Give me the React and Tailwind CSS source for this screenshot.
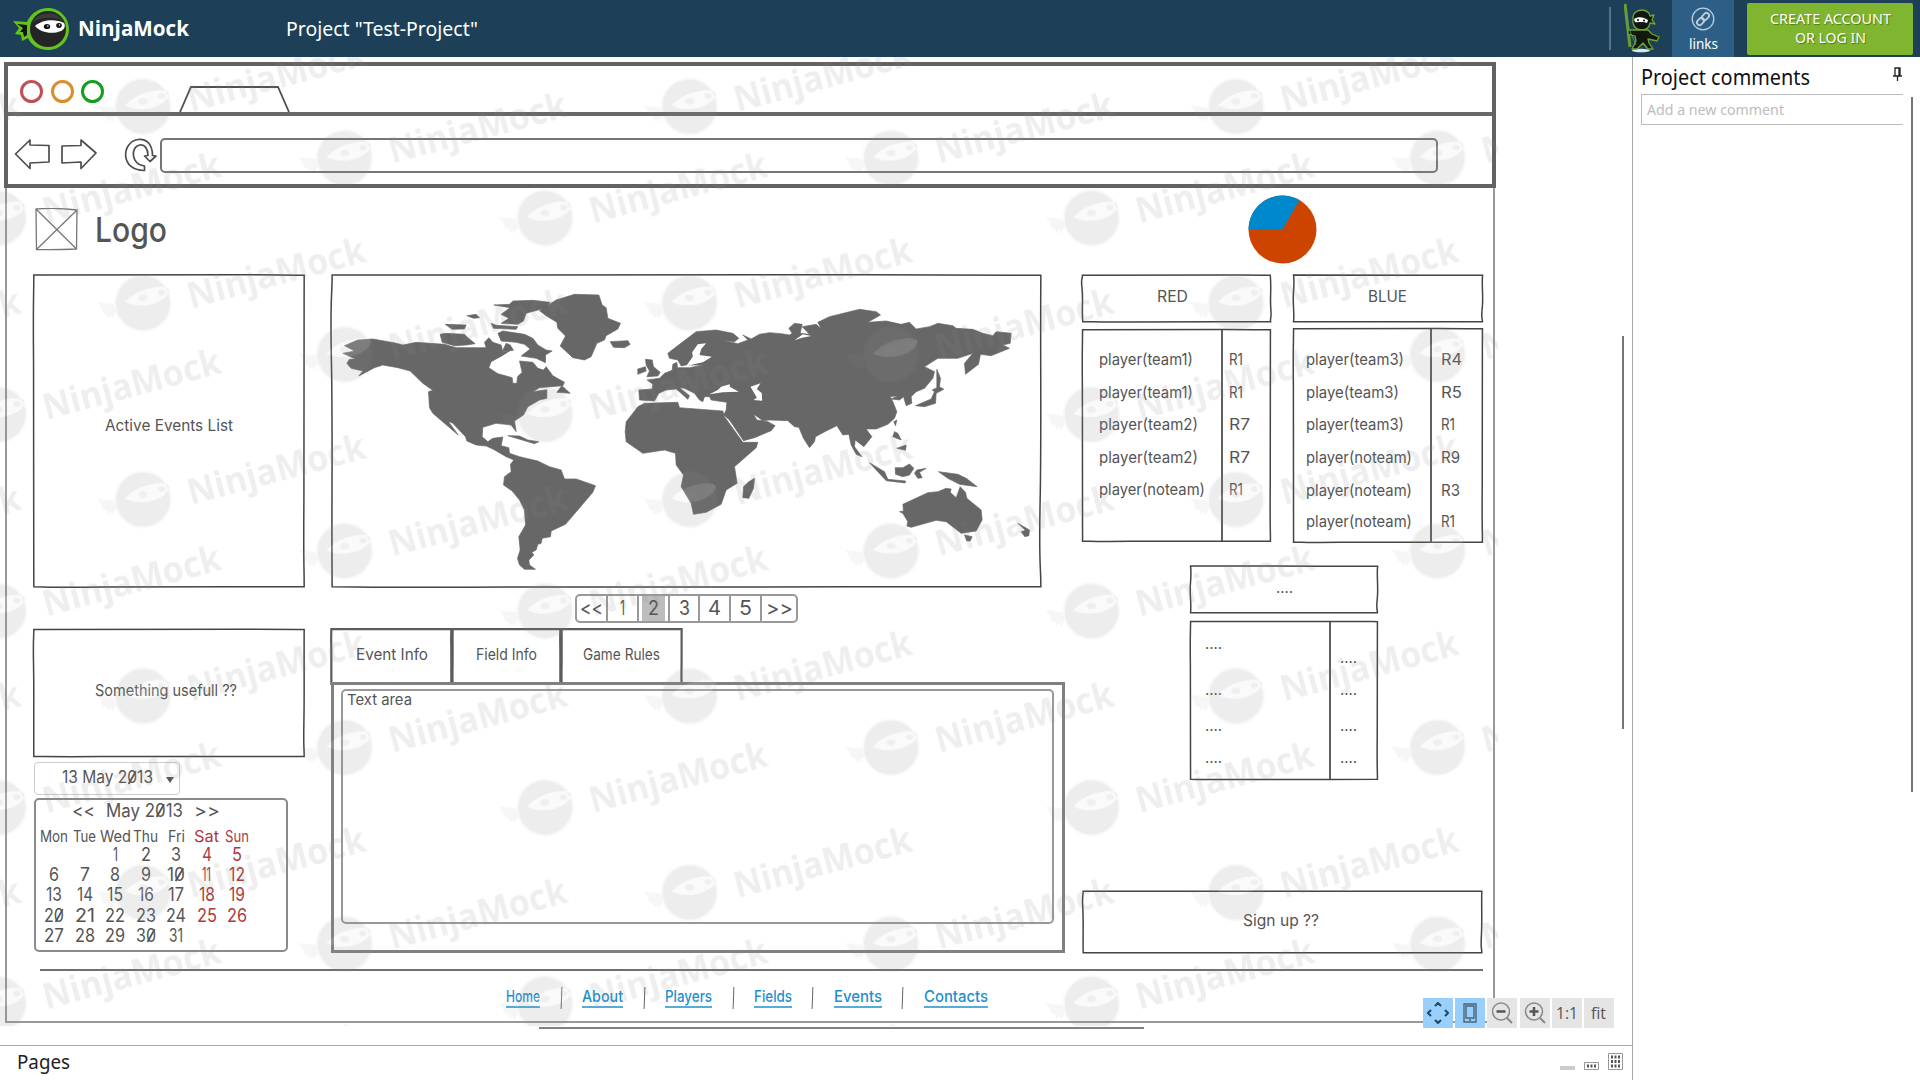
import React, { useLayoutEffect, useRef } from "react";

/* Zeros are written with a slash, as in technical handwriting. */
function slashed(text) {
  if (typeof text !== "string" || !text.includes("0")) return text;
  return text.split("").map((c, i) => c === "0" ? (
    <span key={i} className="relative inline-block after:absolute after:left-[calc(50%-1px)] after:top-[1px] after:h-[15px] after:w-[1.5px] after:rotate-[32deg] after:bg-current after:content-['']">0</span>
  ) : c);
}

/* One line of text condensed or stretched to a given width. */
function Fit({ w, className = "", children }) {
  const ref = useRef(null);
  useLayoutEffect(() => {
    const el = ref.current;
    el.style.transform = "none";
    el.style.transform = `scaleX(${w / el.getBoundingClientRect().width})`;
  }, [w, children]);
  return (
    <span className={`inline-block whitespace-nowrap text-left ${className}`} style={{ width: w }}>
      <span ref={ref} className="inline-block origin-left">{slashed(children)}</span>
    </span>
  );
}

const WOBBLES = [
  "M.3 .2C20 .9 45 -.3 70 .3S92 .8 99.8 .3C99.2 20 100.3 45 99.6 70S99.9 95 99.7 99.7C80 99.2 60 100.2 40 99.5S10 99.9 .3 99.7C.8 80 -.2 60 .2 40S.6 10 .3 .2Z",
  "M.2 .6C25 -.4 50 .4 75 0S95 .7 99.6 .5C100.3 25 99.4 50 99.9 72S99.4 92 99.8 99.4C75 100.1 45 99.3 25 99.9S5 99.4 .4 99.6C-.2 75 .7 50 0 28S.4 8 .2 .6Z",
  "M.3 .3C25 .45 50 .2 75 .25S95 .4 99.7 .4C99.6 25 99.8 50 99.6 72S99.7 92 99.7 99.6C75 99.7 45 99.5 25 99.7S5 99.6 .3 99.6C.2 75 .4 50 .2 28S.3 8 .3 .3Z",
];

/* Hand-drawn rectangle outline laid over the edge of its box. */
function Outline({ v = 0, thick = false }) {
  return (
    <svg className="pointer-events-none absolute left-[-1px] top-[-1px] h-[calc(100%+2px)] w-[calc(100%+2px)] overflow-visible" viewBox="0 0 100 100" preserveAspectRatio="none" fill="none" stroke={thick ? "#5c5c5c" : "#444"} strokeWidth={thick ? 2.2 : 1.5}>
      <path d={WOBBLES[v]} vectorEffect="non-scaling-stroke" />
    </svg>
  );
}

function NinjaLogo() {
  return (
    <svg width="56" height="42" viewBox="0 0 56 42" className="shrink-0">
      <path d="M0 13 L14 14 C18 5 26 0 35 0 C47 0 56 10 56 21 C56 33 47 42 35 42 C25 42 18 37 15 30 L9 33 L8 27 L2 26 L6 20 Z" fill="#62c41c" />
      <path d="M4 16 L14 17 L14 27 L11 29 L10 24 L7 24 L10 20 Z" fill="#141414" />
      <circle cx="35" cy="21" r="18" fill="#252525" />
      <path d="M18 15 C24 4 43 1 50 13 C40 8 28 9 18 15 Z" fill="#3b3b3b" />
      <path d="M22 18 C30 11 43 11 51 15 C53 18 51 22 48 23 C38 27 27 24 22 18 Z" fill="#fff" />
      <ellipse cx="34" cy="18.5" rx="3.2" ry="2.6" fill="#141414" />
      <ellipse cx="46" cy="17.5" rx="2.8" ry="2.4" fill="#141414" />
      <circle cx="34.8" cy="18" r="0.8" fill="#fff" />
      <circle cx="46.5" cy="17" r="0.8" fill="#fff" />
    </svg>
  );
}

function NinjaFigure() {
  return (
    <svg width="36" height="50" viewBox="0 0 36 50">
      <ellipse cx="17" cy="47.5" rx="9" ry="1.8" fill="#d9e6f0" />
      <path d="M1 1 L6 44" stroke="#6b9a3a" strokeWidth="3" />
      <g fill="#12170f" stroke="#6fa52d" strokeWidth="1.3" strokeLinejoin="round">
        <path d="M9 15 C9 9 14 7 18 7 C22 7 26 10 26 13 L30 12 L28 17 L31 21 L26 20 C25 25 22 27 18 27 C12 27 8 23 9 15 Z" />
        <path d="M14 27 L24 27 L28 31 L35 34 L33 38 L24 36 L25 40 L29 46 L24 46 L19 40 L13 46 L8 46 L12 38 L11 33 L4 31 L4 27 Z" />
      </g>
      <path d="M10 16 C14 13 20 14 24 17 L23 20 C18 18 14 20 11 19 Z" fill="#fff" />
      <circle cx="14" cy="17" r="1" />
      <circle cx="20" cy="17.6" r="1" />
      <path d="M6 28 L12 42" stroke="#6b9a3a" strokeWidth="0.8" />
    </svg>
  );
}

function Header() {
  return (
    <header className="flex h-[57px] shrink-0 items-center bg-[#1d4058] text-white">
      <div className="flex w-[286px] items-center pl-[13px]">
        <NinjaLogo />
        <Fit w={111} className="mb-[3px] ml-[9px] font-['Open_Sans',sans-serif] text-[22px] font-bold leading-none">NinjaMock</Fit>
      </div>
      <Fit w={192} className="text-[20px] leading-none">Project "Test-Project"</Fit>
      <div className="ml-auto flex h-full items-center">
        <div className="h-[43px] w-[2px] bg-[#56728a]" />
        <div className="ml-[13px] w-[48px] pb-[2px]"><NinjaFigure /></div>
        <div className="flex h-full w-[62px] flex-col items-center bg-[#2d5f86] pt-[7px]">
          <svg width="24" height="24" viewBox="0 0 24 24" fill="none" stroke="#b9cfdf">
            <circle cx="12" cy="12" r="10.8" strokeWidth="1.3" />
            <g strokeWidth="1.9" transform="rotate(-45 12 12)">
              <rect x="4.5" y="9.4" width="8" height="5.2" rx="2.6" />
              <rect x="11.5" y="9.4" width="8" height="5.2" rx="2.6" />
            </g>
          </svg>
          <Fit w={29} className="mt-[5px] text-[15px] leading-none">links</Fit>
        </div>
        <div className="ml-[13px] mr-[7px] flex h-[52px] w-[166px] flex-col items-center justify-center gap-[4px] rounded-[2px] bg-[#80b62f] pb-[2px] [text-shadow:1px_1px_1px_#4c7a13]">
          <Fit w={121} className="text-[15px] leading-none">CREATE ACCOUNT</Fit>
          <Fit w={71} className="text-[15px] leading-none">OR LOG IN</Fit>
        </div>
      </div>
    </header>
  );
}

function BrowserChrome() {
  return (
    <div className="absolute left-[4px] top-[5px] h-[126px] w-[1492px] border-4 border-[#626262]">
      <div className="flex h-[50px] items-center border-b-4 border-[#686868]">
        <div className="ml-[12px] mt-[4px] flex gap-[7.5px]">
          <i className="h-[23px] w-[23px] rounded-full border-[3px] border-[#bf4f55]" />
          <i className="h-[23px] w-[23px] rounded-full border-[3px] border-[#dc8c2a]" />
          <i className="h-[23px] w-[23px] rounded-full border-[3px] border-[#149e1a]" />
        </div>
        <svg width="112" height="27" viewBox="0 0 112 27" className="ml-[75px] self-end" fill="none" stroke="#505050" strokeWidth="1.8">
          <path d="M1 27 L12 2 L99 2 L110 27" />
        </svg>
      </div>
      <div className="flex items-start pt-[21px]">
        <svg width="152" height="36" viewBox="8 137 152 36" fill="none" stroke="#4e4e4e" strokeWidth="1.7" strokeLinejoin="round">
          <path d="M15.500 154 L30 140 V145 L49 145.500 V162 L30 163 V168.500 Z" />
          <path d="M62 146 L81 145.500 V140 L96 153 L81 168.500 V162 L62 163 Z" />
          <path d="M144.500 170.500 C120 171 121 142 138 139.500 C148 138.500 152.500 146 152.500 155.500 L156 156 L150 161.500 L144.500 156 L148 155.500 C148 149 145 144.500 140 145 C130 146.500 131 165 144.500 166 Z" />
        </svg>
        <div className="mt-px h-[35px] w-[1278px] rounded-[5px] border-2 border-[#757575]" />
      </div>
    </div>
  );
}

const AMERICAS = [
  "M75 242L115 225L160 222L228 234L250 240L290 232L375 238L410 248L500 248L495 232L508 218L520 232L545 240L550 262L570 258L548 272L515 290L508 308L535 326L578 338L580 355L592 355L594 335L608 322L600 288L640 292L655 310L672 315L680 305L700 332L735 352L730 362L660 368L640 380L682 374L682 400L660 405L625 425L612 450L585 468L590 500L575 480L530 475L490 487L488 515L505 530L520 520L550 516L545 542L568 548L570 565L600 575L655 588L690 605L725 615L735 642L770 642L828 662L820 682L738 778L695 798L693 815L668 820L665 835L655 838L650 855L637 862L643 870L628 885L630 900L648 913L615 913L600 900L594 880L602 855L598 815L618 780L615 735L600 705L578 678L552 660L555 635L575 620L573 598L583 585L560 575L520 552L500 543L470 540L442 528L438 515L400 475L388 470L416 510L340 445L330 428L327 380L340 376L310 355L272 318L235 308L190 300L165 308L118 333L130 318L95 310L82 295L90 283L108 282L70 265L105 258Z",
  "M978 283L998 285L1002 305L1022 322L1015 333L982 335L990 318L980 300Z",
  "M955 312L978 305L980 318L955 328Z",
  "M872 230L925 227L932 238L915 248L882 247Z",
  "M660 137L710 105L765 88L838 90L848 120L860 128L865 160L903 175L895 192L860 212L855 225L832 235L815 275L795 285L760 278L722 243L738 213L715 190L712 172L680 152Z",
  "M523 120L570 118L580 108L640 106L692 112L680 128L620 145L612 168L595 178L545 175L568 160L545 148L572 128Z",
  "M515 175L530 181L595 185L590 193L522 190Z",
  "M535 205L550 198L615 208L640 220L655 240L680 255L698 258L678 270L678 293L650 280L605 273L632 252L615 238L590 232L545 228Z",
  "M560 235L572 240L582 256L548 260Z",
  "M362 208L380 205L435 208L445 218L467 236L440 240L405 242L368 232Z",
  "M377 178L440 180L435 192L398 193Z",
  "M442 152L470 148L480 158L462 160Z",
  "M727 362L752 385L712 382Z",
  "M565 512L600 513L625 525L658 530L645 536L618 528Z",
];

const OLD_WORLD = [
  "M-122 375L-82 372L-80 358L-97 345L-60 340L-45 325L-22 316L-20 298L-8 292L-6 308L30 308L70 300L20 300L5 303L-5 285L-30 280L-35 265L0 238L50 200L110 195L160 205L178 220L165 230L130 226L175 236L205 225L190 210L215 222L240 208L270 203L305 206L330 210L338 205L328 190L345 175L368 178L362 205L390 208L368 185L410 178L425 192L415 172L450 155L540 133L590 140L603 150L565 172L620 168L665 178L690 172L710 192L750 185L775 175L820 182L830 190L880 193L910 205L940 212L950 200L995 205L992 235L970 240L990 250L935 272L903 268L897 298L858 328L855 295L880 265L835 280L775 280L735 305L765 320L760 340L735 370L710 380L695 395L697 415L680 422L672 395L660 405L635 402L655 392L632 395L640 410L652 440L645 460L625 478L590 492L560 492L577 515L553 545L527 525L525 545L547 575L530 568L515 540L508 508L490 510L472 482L440 498L408 515L405 530L390 548L372 520L358 487L345 485L325 467L270 465L250 467L222 447L232 465L265 470L287 482L275 497L225 518L192 527L150 465L133 450L140 435L142 412L95 405L90 395L75 395L70 410L60 405L45 385L15 370L0 368L30 392L25 403L5 385L-10 372L-40 375L-62 385L-75 408L-120 405Z",
  "M-105 415L-5 412L0 428L50 432L130 438L135 455L190 532L235 532L230 548L165 605L173 655L140 675L125 718L80 742L42 748L35 715L5 665L12 630L-10 600L-12 565L-45 555L-110 565L-160 530L-163 500L-160 470L-140 445L-125 425Z",
  "M225 640L222 670L208 700L190 698L192 665L208 650Z",
  "M570 593L615 620L625 643L678 648L677 654L620 647Z",
  "M647 608L670 608L690 597L703 610L690 630L670 635L648 628Z",
  "M712 615L740 610L720 622L728 638L715 640L705 625Z",
  "M777 620L835 628L860 640L893 665L840 658L805 640Z",
  "M670 718L745 683L775 680L800 670L815 672L812 682L830 698L842 665L858 682L862 700L905 735L908 765L890 798L845 805L800 770L770 766L695 787L682 783L685 770L670 745L660 740L672 738Z",
  "M855 810L878 815L872 828L862 828Z",
  "M1015 775L1050 795L1048 812L1036 815L1025 800L1038 796Z",
  "M772 313L783 340L780 365L793 373L770 385L768 415L735 425L708 422L755 402L765 380L758 375L772 368Z",
  "M643 470L652 465L648 482Z",
  "M645 500L655 505L665 525L640 515Z",
  "M652 550L680 540L678 556Z",
];

const SEAS = [
  "M90 388L115 375L125 365L150 358L152 366L178 380L130 382Z",
  "M213 365L243 355L232 372L247 385L248 407L222 405L232 398Z",
  "M80 235L55 238L38 262L40 275L20 303L70 292L97 275L60 270L65 252Z",
  "M345 226L370 208L395 213L368 218Z",
];

function WorldMap() {
  return (
    <svg width="706" height="308" viewBox="333.5 277 706 308" fill="#676767" stroke="#676767" strokeWidth="2" strokeLinejoin="round" className="block">
      <g transform="translate(320 265) scale(.33333)">
        {AMERICAS.map((d) => <path key={d} d={d} />)}
        <path d="M388 470L400 478L422 508L416 504Z" fill="#fff" stroke="none" />
      </g>
      <g transform="translate(680 265) scale(.33333)">
        {OLD_WORLD.map((d) => <path key={d} d={d} />)}
        {SEAS.map((d) => <path key={d} d={d} fill="#fff" stroke="none" />)}
      </g>
    </svg>
  );
}

const RED = [
  ["player(team1)", 94, "R1", 14],
  ["player(team1)", 94, "R1", 14],
  ["player(team2)", 99, "R7", 21],
  ["player(team2)", 99, "R7", 21],
  ["player(noteam)", 106, "R1", 14],
];
const BLUE = [
  ["player(team3)", 98, "R4", 21],
  ["playe(team3)", 93, "R5", 21],
  ["player(team3)", 98, "R1", 14],
  ["player(noteam)", 106, "R9", 19],
  ["player(noteam)", 106, "R3", 19],
  ["player(noteam)", 106, "R1", 14],
];

function TeamRows({ rows, nameClass, rankClass }) {
  return (
    <>
      <div className={nameClass}>
        {rows.map((r, i) => <div key={i} className="flex h-[32.6px] items-center last:-mt-px"><Fit w={r[1]}>{r[0]}</Fit></div>)}
      </div>
      <div className={rankClass}>
        {rows.map((r, i) => <div key={i} className="flex h-[32.6px] items-center last:-mt-px"><Fit w={r[3]}>{r[2]}</Fit></div>)}
      </div>
    </>
  );
}

const DAYS = [["Mon", 28], ["Tue", 23], ["Wed", 31], ["Thu", 25], ["Fri", 17], ["Sat", 25], ["Sun", 24]];

function Calendar() {
  const cells = ["", ""].concat(Array.from({ length: 31 }, (_, i) => String(i + 1)));
  return (
    <div className="absolute left-[34px] top-[741px] h-[154px] w-[254px] rounded-[5px] border-2 border-[#8a8a8a] pl-[3px]">
      <div className="flex h-[22px] items-center gap-[11px] pl-[33px] text-[18px]">
        <Fit w={23}>&lt;&lt;</Fit><Fit w={77}>May 2013</Fit><Fit w={26}>&gt;&gt;</Fit>
      </div>
      <div className="grid grid-cols-[repeat(7,30.5px)] justify-items-center pt-[6px] text-[16px]">
        {DAYS.map(([d, w], i) => <Fit key={d} w={w} className={i > 4 ? "h-[17px] text-[#ae3a3d]" : "h-[17px]"}>{d}</Fit>)}
      </div>
      <div className="grid auto-rows-[20.2px] grid-cols-[repeat(7,30.5px)] items-center justify-items-center text-[18px]">
        {cells.map((c, i) => c ? (
          <Fit key={i} w={c.length === 1 ? (c === "1" ? 5 : 10) : c === "11" ? 9 : c === "10" ? 18 : c[0] === "1" ? 16 : c === "31" ? 14 : 20} className={i % 7 > 4 ? "text-[#ae3a3d]" : ""}>{c}</Fit>
        ) : <span key={i} />)}
      </div>
    </div>
  );
}

const PAGER = [["<<", 23, "w-[29px]"], ["1", 5, "w-[31px]"], ["2", 11, "w-[31px]"], ["3", 11, "w-[30px]"], ["4", 13, "w-[31px]"], ["5", 13, "w-[31px]"], [">>", 27, "w-[36px]"]];
const LINKS = [["Home", 34, "w-[34px]"], ["About", 41, "w-[41px]"], ["Players", 47, "w-[47px]"], ["Fields", 38, "w-[38px]"], ["Events", 48, "w-[48px]"], ["Contacts", 64, "w-[64px]"]];
const GAPS = ["ml-[21px] mr-[20px]", "ml-[21px] mr-[20px]", "ml-[21px] mr-[20px]", "ml-[20px] mr-[21px]", "ml-[20px] mr-[21px]"];

function Watermark() {
  const marks = [[143, 49.5], [344.5, 101], [545, 161], [-1.5, 161], [-202, 101], [143, -147], [344.5, -95.5], [545, -35.5], [-1.5, -35.5], [143, 246], [344.5, 297.5]];
  return (
    <svg className="pointer-events-none absolute left-0 top-0" width="1498" height="969" aria-hidden="true">
      <defs>
        <pattern id="mark" width="546.5" height="196.5" patternUnits="userSpaceOnUse">
          {marks.map(([x, y], i) => (
            <g key={i} transform={`translate(${x} ${y})`}>
              <g fill="#888">
                <circle r="29" fillOpacity=".05" />
                <path d="M-29 1L-46 -1Q-42 3 -41 7L-39 11L-37 10L-35 15L-32 12L-31 16L-27 9Z" fillOpacity=".08" />
                <path fillOpacity=".1" fillRule="evenodd" d="M-27 0A27 27 0 1 1 27 0A27 27 0 1 1 -27 0ZM-18 -1Q-6 -14 14 -16Q24 -17 26.500 -13Q25 -4 10 1Q-6 5 -18 -1Z" />
                <ellipse cx="0" cy="-5" rx="4.5" ry="3.3" fillOpacity=".1" />
                <ellipse cx="18.5" cy="-10.5" rx="3.6" ry="2.8" fillOpacity=".1" />
                <text transform="translate(48 5.500) rotate(-15)" textLength="183" lengthAdjust="spacingAndGlyphs" fillOpacity=".14" className="font-['Open_Sans',sans-serif] text-[36px] font-bold">NinjaMock</text>
              </g>
              <path d="M-18 -1Q-6 -14 14 -16Q24 -17 26.500 -13Q25 -4 10 1Q-6 5 -18 -1Z" fill="#fff" fillOpacity=".13" />
            </g>
          ))}
        </pattern>
      </defs>
      <rect width="1498" height="969" fill="url(#mark)" />
    </svg>
  );
}

/* Free canvas holding the wireframe widgets; it starts right below the header. */
function Canvas() {
  return (
    <main className="relative h-[988px] shrink-0 overflow-hidden bg-white font-['Inter',sans-serif] text-[16px] leading-none text-[#555]">
      <div className="absolute left-[5px] top-[128px] h-[838px] w-[1490px] border-2 border-t-0 border-[#999]" />
      <BrowserChrome />

      <div className="absolute left-[35px] top-[151px] flex items-center">
        <svg width="43" height="43" viewBox="0 0 43 43" fill="none" stroke="#777" strokeWidth="1.3">
          <path d="M1 1Q20 -.5 42 2L41.500 41Q20 42 1.500 41.500ZM1 1L41.500 41M42 2L1.500 41.500" />
        </svg>
        <Fit w={72} className="ml-[17px] text-[34px] font-medium">Logo</Fit>
      </div>
      <svg className="absolute left-[1248px] top-[138px]" width="69" height="69" viewBox="-34.5 -34.5 69 69">
        <circle r="34" fill="#c40" />
        <path d="M0 0H-34A34 34 0 0 1 17 -29.4Z" fill="#08c" />
      </svg>

      <div className="absolute left-[34px] top-[218px] flex h-[312px] w-[270px] items-center justify-center pb-[13px]"><Outline v={2} /><Fit w={128}>Active Events List</Fit></div>
      <div className="absolute left-[331px] top-[218px] h-[312px] w-[711px] p-[2px]"><Outline v={2} /><WorldMap /></div>
      <div className="absolute left-[34px] top-[573px] flex h-[126px] w-[270px] items-center justify-center pb-[6px] pr-[7px]"><Outline v={2} /><Fit w={142}>Something usefull ??</Fit></div>
      <div className="absolute left-[34px] top-[705px] flex h-[33px] w-[146px] items-center rounded-[4px] border border-[#ccc] pb-[3px] pl-[27px]">
        <Fit w={91} className="text-[17px]">13 May 2013</Fit>
        <svg width="8" height="6" className="ml-[13px] mt-[5px]" fill="#555"><path d="M0 0H8L4 6Z" /></svg>
      </div>
      <Calendar />

      <div className="absolute left-[575px] top-[537px] flex h-[29px] w-[223px] overflow-hidden rounded-[5px] border-2 border-[#999] text-[20px]">
        {PAGER.map(([t, w, c], i) => (
          <div key={t} className={`${c} flex shrink-0 justify-center ${i ? "border-l-2 border-[#999]" : ""}`}>
            <div className={i === 2 ? "flex w-[23px] items-center justify-center bg-[#bdbdbd] pb-[2px]" : "flex items-center pb-[2px]"}><Fit w={w}>{t}</Fit></div>
          </div>
        ))}
      </div>

      <div className="absolute left-[332px] top-[573px] flex h-[53px] *:relative *:flex *:items-center *:justify-center *:pb-[5px]">
        <div className="w-[120px]"><Outline thick v={2} /><Fit w={72}>Event Info</Fit></div>
        <div className="w-[109px]"><Outline thick v={2} /><Fit w={61}>Field Info</Fit></div>
        <div className="w-[120px]"><Outline thick v={2} /><Fit w={77}>Game Rules</Fit></div>
      </div>
      <div className="absolute left-[331px] top-[625px] h-[271px] w-[734px] border-[3px] border-[#808080] p-[4px] pl-[7px] pr-[8px]">
        <div className="h-[235px] rounded-[5px] border-2 border-[#999] pl-[4px]"><Fit w={65} className="text-[15px]">Text area</Fit></div>
      </div>

      <div className="absolute left-[1083px] top-[219px] flex h-[45px] w-[187px] items-center justify-center pb-[5px] pr-[8px]"><Outline v={1} /><Fit w={31}>RED</Fit></div>
      <div className="absolute left-[1294px] top-[219px] flex h-[45px] w-[188px] items-center justify-center pb-[6px] pr-[2px]"><Outline /><Fit w={39}>BLUE</Fit></div>
      <div className="absolute left-[1083px] top-[273px] flex h-[211px] w-[187px] pt-[13px]">
        <Outline v={2} />
        <TeamRows rows={RED} nameClass="w-[138px] shrink-0 pl-[16px]" rankClass="-mt-[13px] grow border-l-2 border-[#606060] pl-[6px] pt-[13px]" />
      </div>
      <div className="absolute left-[1294px] top-[272px] flex h-[213px] w-[188px] pt-[14px]">
        <Outline v={2} />
        <TeamRows rows={BLUE} nameClass="w-[136px] shrink-0 pl-[12px]" rankClass="-mt-[14px] grow border-l-2 border-[#606060] pl-[9px] pt-[14px]" />
      </div>

      <div className="absolute left-[1191px] top-[510px] flex h-[45px] w-[186px] items-center justify-center pb-[6px]"><Outline /><Fit w={17}>....</Fit></div>
      <div className="absolute left-[1191px] top-[565px] flex h-[157px] w-[186px]">
        <Outline v={2} />
        <div className="flex w-[138px] shrink-0 flex-col pl-[14px] pt-[13px]">
          <Fit w={17} className="h-[46px]">....</Fit><Fit w={17} className="h-[36px]">....</Fit><Fit w={17} className="h-[32px]">....</Fit><Fit w={17}>....</Fit>
        </div>
        <div className="flex grow flex-col border-l-2 border-[#606060] pl-[9px] pt-[27px]">
          <Fit w={17} className="h-[32px]">....</Fit><Fit w={17} className="h-[36px]">....</Fit><Fit w={17} className="h-[32px]">....</Fit><Fit w={17}>....</Fit>
        </div>
      </div>
      <div className="absolute left-[1083px] top-[835px] flex h-[60px] w-[399px] items-center justify-center pb-[4px] pr-[3px]"><Outline v={2} /><Fit w={76}>Sign up ??</Fit></div>

      <div className="absolute left-[40px] top-[912px] h-[2px] w-[1443px] bg-[#707070]" />
      <nav className="absolute left-[506px] top-[930px] flex text-[#1f8fcf]">
        {LINKS.map(([t, w, c], i) => (
          <div key={t} className="flex">
            {i > 0 && <div className={`${GAPS[i - 1]} h-[22px] w-px rotate-2 bg-[#666]`} />}
            <div className={`${c} h-[21px] shrink-0 border-b-2 border-[#55acd9] pt-px font-medium`}><Fit w={w}>{t}</Fit></div>
          </div>
        ))}
      </nav>
      <Watermark />

      <div className="absolute left-[539px] top-[970px] h-[2px] w-[605px] bg-[#808080]" />
      <div className="absolute left-[1622px] top-[279px] h-[393px] w-[2px] bg-[#777]" />
      <ZoomTools />
    </main>
  );
}

function ZoomTools() {
  return (
    <div className="absolute left-[1423px] top-[941px] flex gap-[2.2px] font-['Open_Sans',sans-serif] text-[16px] text-[#555] *:flex *:h-[30px] *:w-[30px] *:items-center *:justify-center *:bg-[#e5e5e5]">
      <div className="!bg-[#99d0fb]">
        <svg width="22" height="22" viewBox="0 0 22 22" fill="none" stroke="#1f4560" strokeWidth="2"><path d="M8 4L11 1L14 4M8 18L11 21L14 18M4 8L1 11L4 14M18 8L21 11L18 14" /></svg>
      </div>
      <div className="!bg-[#99d0fb]">
        <svg width="14" height="20" viewBox="0 0 14 20" fill="none" stroke="#47667c" strokeWidth="1.4"><path d="M1 1H13V19H1ZM3 3H11V15H3ZM6 17H8" /></svg>
      </div>
      <div>
        <svg width="22" height="22" viewBox="0 0 22 22" fill="none" stroke="#888" strokeWidth="1.5"><circle cx="10" cy="9.5" r="8.5" /><path d="M16 16L21 21" strokeWidth="2" /><path d="M5.500 9.500H14.500" stroke="#555" strokeWidth="2.5" /></svg>
      </div>
      <div>
        <svg width="22" height="22" viewBox="0 0 22 22" fill="none" stroke="#888" strokeWidth="1.5"><circle cx="10" cy="9.5" r="8.5" /><path d="M16 16L21 21" strokeWidth="2" /><path d="M5.500 9.500H14.500M10 5V14" stroke="#555" strokeWidth="2.5" /></svg>
      </div>
      <div><Fit w={22}>1:1</Fit></div>
      <div><Fit w={15}>fit</Fit></div>
    </div>
  );
}

export default function App() {
  return (
    <div className="flex h-[1080px] w-[1920px] flex-col overflow-hidden bg-white font-['Noto_Sans',sans-serif]">
      <Header />
      <div className="flex min-h-0 grow">
        <div className="flex w-[1632px] shrink-0 flex-col">
          <Canvas />
          <footer className="flex grow items-center border-t border-[#aaa] pb-[2px] pl-[17px] pr-[9px]">
            <Fit w={53} className="text-[19px] leading-none text-[#222]">Pages</Fit>
            <div className="mb-[5px] ml-auto flex items-end gap-[9px] self-end">
              <div className="mb-[3px] h-[4px] w-[15px] bg-[#ccc]" />
              <svg className="mb-[3px]" width="15" height="8" viewBox="0 0 15 8"><path d="M.5 .5H14.500V7.500H.5Z" fill="#fff" stroke="#999" /><path d="M3 4H5M6.500 4H8.500M10 4H12" stroke="#555" strokeWidth="3" /></svg>
              <svg className="mb-[3px]" width="15" height="17" viewBox="0 0 15 17"><path d="M.5 .5H14.500V16.500H.5Z" fill="#fff" stroke="#999" /><path d="M3 4H5M6.500 4H8.500M10 4H12M3 8.500H5M6.500 8.500H8.500M10 8.500H12M3 13H5M6.500 13H8.500M10 13H12" stroke="#555" strokeWidth="3" /></svg>
            </div>
          </footer>
        </div>
        <aside className="flex grow border-l border-[#aaa] pl-[8px] pr-[7px]">
          <div className="w-[268px] pt-[10px]">
            <div className="flex items-start justify-between pr-[7px]">
              <Fit w={169} className="text-[21px] leading-none text-[#111]">Project comments</Fit>
              <svg width="9" height="14" viewBox="0 0 9 14" fill="none" stroke="#222" strokeWidth="1.3"><path d="M2 9V1H7V9M6 1V9M0 9H9M4.500 9V14" /></svg>
            </div>
            <div className="mt-[6px] flex h-[31px] w-[262px] items-center border border-r-0 border-[#bbb] pl-[5px]">
              <Fit w={137} className="text-[15px] leading-none text-[#bdbdbd]">Add a new comment</Fit>
            </div>
          </div>
          <div className="ml-auto mt-[40px] h-[695px] w-[2px] bg-[#777]" />
        </aside>
      </div>
    </div>
  );
}
